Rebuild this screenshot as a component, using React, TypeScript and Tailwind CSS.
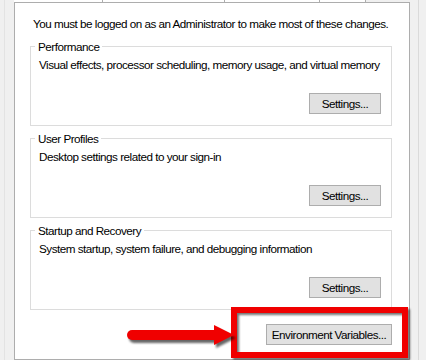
import React from 'react';

const groups = [
  { title: 'Performance', text: 'Visual effects, processor scheduling, memory usage, and virtual memory' },
  { title: 'User Profiles', text: 'Desktop settings related to your sign-in' },
  { title: 'Startup and Recovery', text: 'System startup, system failure, and debugging information' },
];

function WinButton({ label, width }: { label: string; width: string }) {
  return (
    <button
      className={`${width} h-[21px] bg-[#e1e1e1] border border-[#adadad] leading-none text-black whitespace-nowrap`}
    >
      {label}
    </button>
  );
}

function GroupBox({ title, text }: { title: string; text: string }) {
  return (
    <fieldset className="min-w-0 border border-[#dcdcdc] px-0 pb-[11px]">
      <legend className="ml-[4px] px-[3px] leading-[15px]">{title}</legend>
      <p className="pl-[8px] pt-[3px] leading-[15px] whitespace-nowrap">{text}</p>
      <div className="mt-[21px] flex justify-end pr-[10px]">
        <WinButton label="Settings..." width="w-[72px]" />
      </div>
    </fieldset>
  );
}

export default function App() {
  return (
    <div className="relative w-[426px] h-[360px] overflow-hidden bg-[#f0f0f0] flex text-[11.7px] tracking-[-0.5px] text-black font-['Liberation_Sans',Arial,sans-serif]">
      <div className="w-[14px] shrink-0 flex">
        <div className="ml-[4px] w-px bg-[#e3e3e3]" />
      </div>

      <div className="w-[396px] shrink-0 flex flex-col">
        <div className="h-[2px] flex">
          <div className="w-[89px] bg-white border-r border-[#adadad]" />
          <div className="w-[122px] bg-white border-r border-[#adadad]" />
          <div className="w-[95px] bg-white border-r border-[#adadad]" />
          <div className="w-[46px] bg-white border-r border-[#adadad]" />
        </div>
        <div className="flex-1 bg-white border border-[#adadad] pl-[15px] pr-[17px]">
          <p className="pl-[3px] pt-[13px] leading-[15px] whitespace-nowrap">
            You must be logged on as an Administrator to make most of these changes.
          </p>
          <div className="mt-[8px] flex flex-col gap-[5px]">
            {groups.map((g) => (
              <GroupBox key={g.title} title={g.title} text={g.text} />
            ))}
          </div>
          <div className="mt-[14px] flex justify-end">
            <WinButton label="Environment Variables..." width="w-[126px]" />
          </div>
        </div>
      </div>

      <div className="flex-1 flex">
        <div className="ml-[8px] w-px bg-[#dadada]" />
      </div>

      {/* annotation overlay */}
      <div className="absolute left-[231px] top-[307px] w-[177px] h-[51px] border-[6px] border-[#f00000] drop-shadow-[2px_2px_1px_rgba(0,0,0,0.55)]" />
      <svg
        className="absolute left-[120px] top-[320px] drop-shadow-[2px_3px_1px_rgba(0,0,0,0.6)]"
        width="120"
        height="32"
        viewBox="0 0 120 32"
      >
        <line x1="12" y1="15" x2="100" y2="15" stroke="#f00000" strokeWidth="10" strokeLinecap="round" />
        <polygon points="94,5 114,15 94,25" fill="#f00000" />
      </svg>
    </div>
  );
}
